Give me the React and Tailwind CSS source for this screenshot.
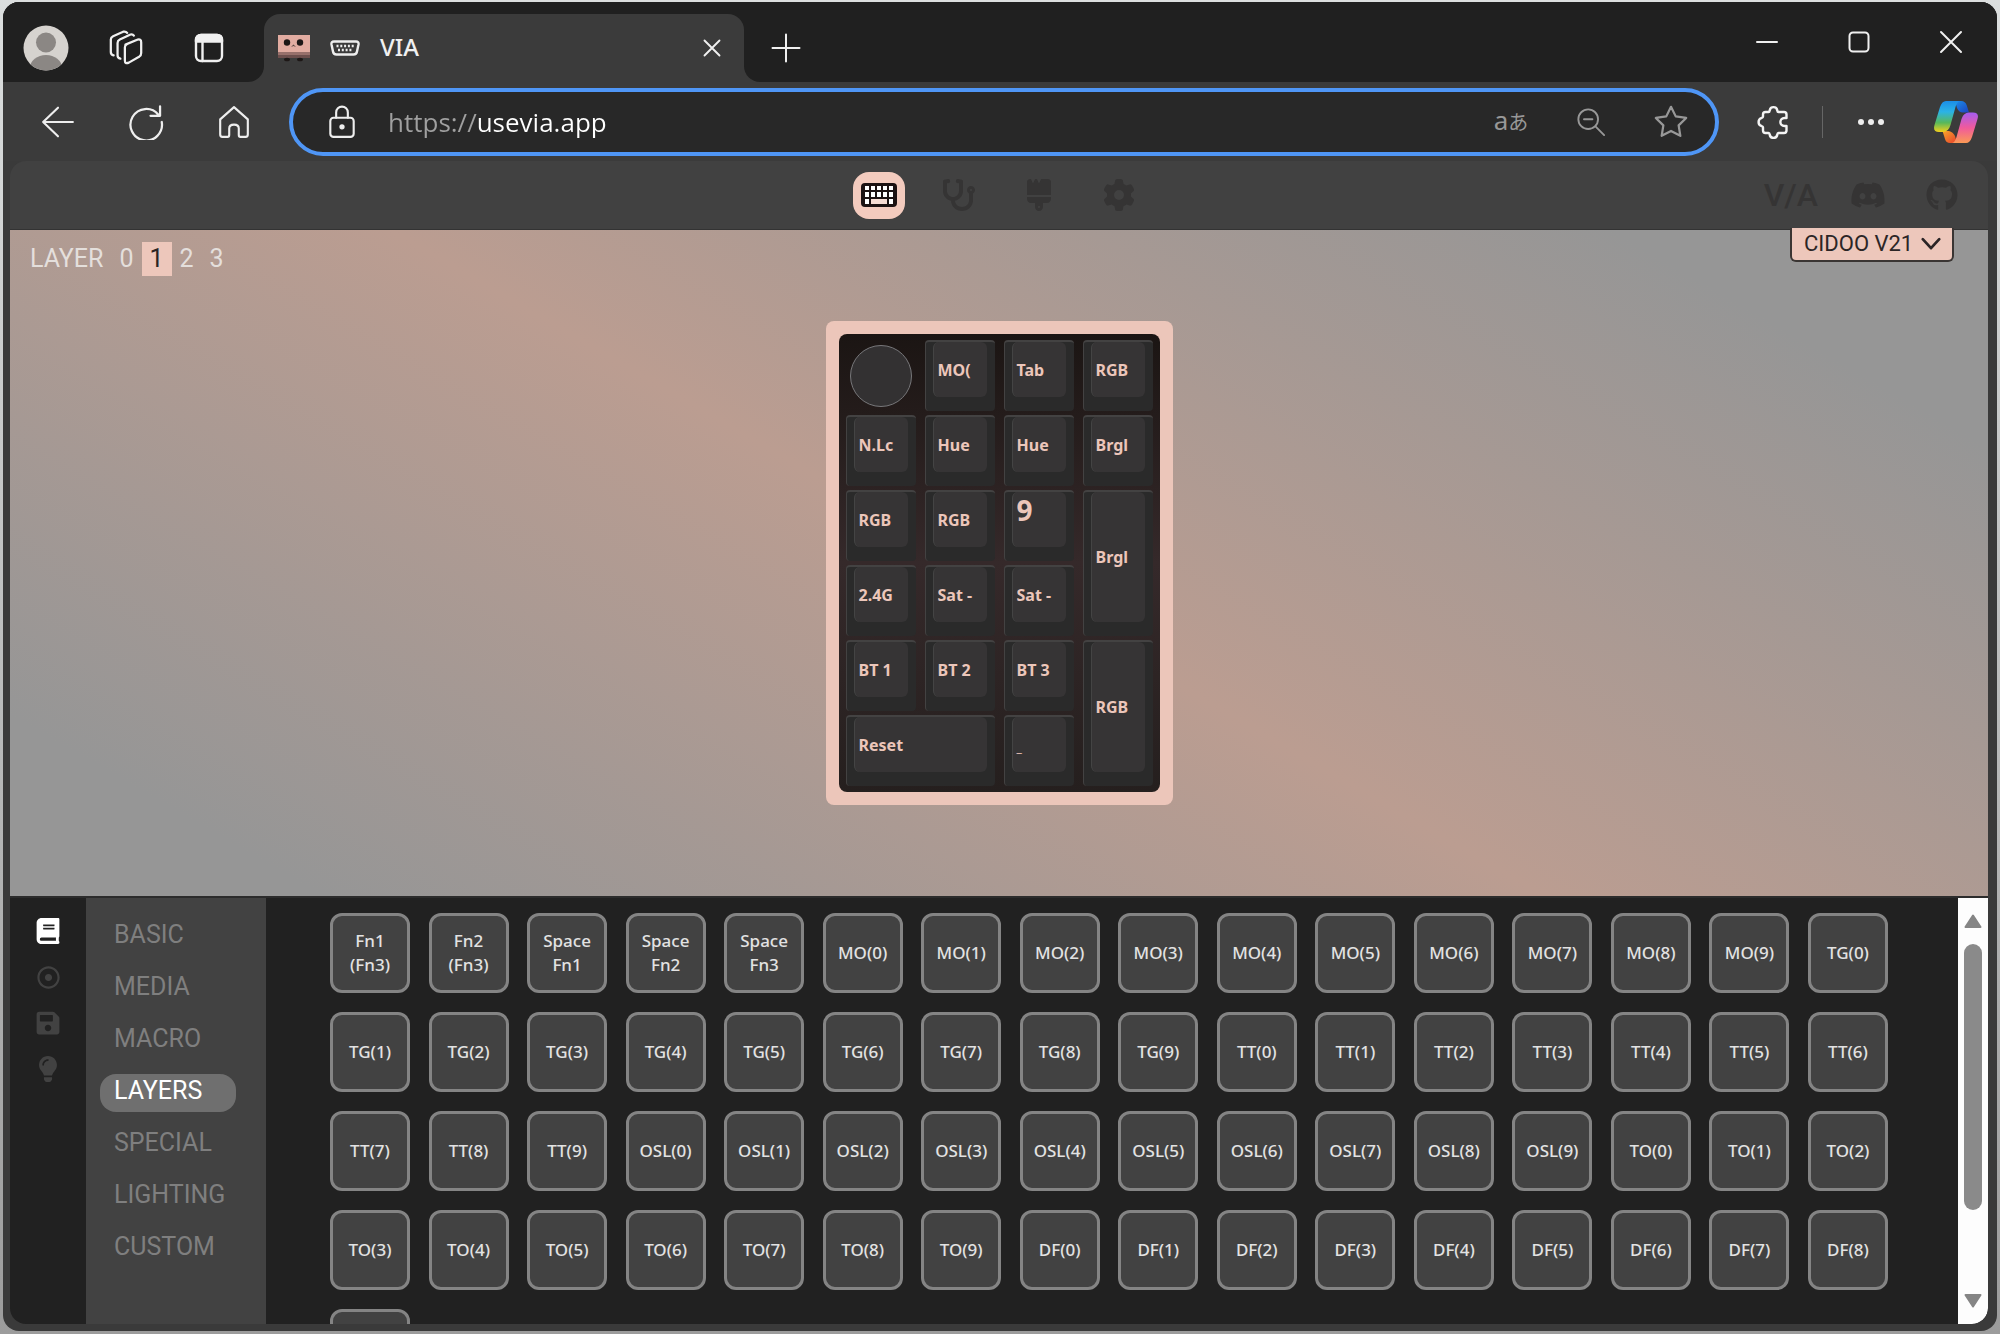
import React from "react";
import {
  FaBook,
  FaDiscord,
  FaGithub,
  FaLightbulb,
  FaRegDotCircle,
  FaSave,
  FaStethoscope,
} from "react-icons/fa";
import { FaBrush, FaGear } from "react-icons/fa6";

const range = (name, from, to) =>
  Array.from({ length: to - from + 1 }, (_, i) => `${name}(${from + i})`);

const keycodes = [
  "Fn1 (Fn3)",
  "Fn2 (Fn3)",
  "Space Fn1",
  "Space Fn2",
  "Space Fn3",
  ...range("MO", 0, 9),
  ...range("TG", 0, 9),
  ...range("TT", 0, 9),
  ...range("OSL", 0, 9),
  ...range("TO", 0, 9),
  ...range("DF", 0, 8),
];

const categories = ["BASIC", "MEDIA", "MACRO", "LAYERS", "SPECIAL", "LIGHTING", "CUSTOM"];

const board = [
  { label: "MO(" },
  { label: "Tab" },
  { label: "RGB" },
  { label: "N.Lc" },
  { label: "Hue" },
  { label: "Hue" },
  { label: "Brgl" },
  { label: "RGB" },
  { label: "RGB" },
  { label: "9", kind: "digit" },
  { label: "Brgl", span: "row-span-2" },
  { label: "2.4G" },
  { label: "Sat -" },
  { label: "Sat -" },
  { label: "BT 1" },
  { label: "BT 2" },
  { label: "BT 3" },
  { label: "RGB", span: "row-span-2" },
  { label: "Reset", span: "col-span-2" },
  { label: "_", kind: "mark" },
];

const labelStyles = {
  digit: "items-start text-[28px] leading-9",
  mark: "items-end pb-4 text-xs leading-4 font-normal",
  text: "items-center text-base",
};

function Line({ size = 32, width = 2, children, ...rest }) {
  return (
    <svg
      width={size}
      height={size}
      viewBox="0 0 32 32"
      fill="none"
      stroke="currentColor"
      strokeWidth={width}
      strokeLinecap="round"
      strokeLinejoin="round"
      aria-hidden="true"
      {...rest}
    >
      {children}
    </svg>
  );
}

function Avatar() {
  return (
    <svg width="46" height="46" viewBox="0 0 46 46" aria-hidden="true">
      <defs>
        <clipPath id="avatar-clip">
          <circle cx="23" cy="23" r="22.5" />
        </clipPath>
      </defs>
      <circle cx="23" cy="23" r="22.5" fill="#d6d3cf" />
      <g clipPath="url(#avatar-clip)" fill="#8b8784">
        <circle cx="23" cy="17.5" r="10" />
        <ellipse cx="23" cy="43" rx="16" ry="13" />
      </g>
    </svg>
  );
}

function Workspaces() {
  return (
    <Line size={36} width={2}>
      <path d="M15.5 13 26.5 8.5Q29.5 8 29.5 11V20.500Q29.500 22.500 28 23.500L18.500 29Q15 30.500 15 27V15.500Q15 13.500 16.500 12.800Z" />
      <path d="M11 25.500Q8.500 25 8.500 22.500V11.500Q8.500 9.500 10.500 8.500L20 4Q22 3.500 23 5" />
      <path d="M5 22.500Q2.500 22 2.500 19.500V8.500Q2.500 6.500 4.500 5.500L13.500 1.500Q16 1 17 2.500" />
    </Line>
  );
}

function TabActions() {
  return (
    <Line size={32} width={2.4}>
      <rect x="3" y="3" width="26" height="26" rx="5" />
      <path d="M3 9.500V8q0-5 5-5h16q5 0 5 5v1.500z" fill="currentColor" />
      <path d="M9.500 10v19" />
    </Line>
  );
}

function Favicon() {
  return (
    <svg width="32" height="27" viewBox="0 0 32 27" aria-hidden="true">
      <rect width="32" height="17" fill="#e2aca1" />
      <rect y="17" width="32" height="3" fill="#98706b" />
      <rect y="20" width="32" height="3" fill="#6d4f4d" />
      <g fill="#1d1716">
        <circle cx="9" cy="7.500" r="3.200" />
        <circle cx="22" cy="7.500" r="3.200" />
        <path d="M13 12l2.500-2.500L18 12l-2.500-1z" opacity=".7" />
        <ellipse cx="9" cy="24.500" rx="3" ry="1.800" />
        <ellipse cx="22" cy="24.500" rx="3" ry="1.800" />
      </g>
    </svg>
  );
}

function SerialPort() {
  return (
    <svg width="30" height="16" viewBox="0 0 30 16" fill="none" aria-hidden="true">
      <path d="M4 1.500h22q3 0 2.500 3l-1.500 7q-.5 3-3.500 3h-17q-3 0-3.500-3l-1.500-7q-.5-3 2.500-3z" stroke="#eee" strokeWidth="2.400" />
      <path d="M6.500 6h18M8 10h15" stroke="#eee" strokeWidth="2.600" strokeDasharray="2 1.800" />
    </svg>
  );
}

function Extensions() {
  return (
    <svg width="32" height="34" viewBox="0 0 32 34" fill="none" stroke="currentColor" strokeWidth="2.400" strokeLinejoin="round" aria-hidden="true">
      <path d="M8.500 7H11.500Q12.500 7 12.700 5.500C13.300 1 19.700 1 20.300 5.500Q20.500 7 21.500 7H27Q29.500 7 29.500 9.500V13H27.500C22 13 22 21 27.500 21H29.500V25.500Q29.500 28 27 28H21.500Q20.500 28 20.300 29.500C19.700 34 13.300 34 12.700 29.500Q12.500 28 11.500 28H8.500Q6 28 6 25.500V22.500Q6 21.500 4.800 21.200C.5 20 .5 14 4.800 12.800Q6 12.500 6 11.500V9.500Q6 7 8.500 7Z" />
    </svg>
  );
}

function KeyboardIcon() {
  const columns = [4, 10, 16, 22, 28];
  return (
    <svg width="36" height="26" viewBox="0 0 36 26" aria-hidden="true">
      <rect x="0" y="1" width="36" height="24" rx="4" fill="#1c1212" />
      <g fill="#fff">
        {columns.map((x) => (
          <rect key={`a${x}`} x={x} y="4" width="4" height="4" />
        ))}
        {columns.map((x) => (
          <rect key={`b${x}`} x={x} y="10" width="4" height="5" />
        ))}
        <rect x="4" y="17" width="4" height="5" />
        <rect x="10" y="17" width="16" height="5" fill="#f6dcd3" />
        <rect x="28" y="17" width="4" height="5" />
      </g>
    </svg>
  );
}

function Copilot() {
  return (
    <svg width="46" height="44" viewBox="0 0 46 44" aria-hidden="true">
      <defs>
        <linearGradient id="cp-left" x1="0" y1="0" x2="0" y2="1">
          <stop offset="0" stopColor="#1b8de8" />
          <stop offset=".35" stopColor="#2bb3e6" />
          <stop offset=".7" stopColor="#58b85a" />
          <stop offset="1" stopColor="#f2cf1d" />
        </linearGradient>
        <linearGradient id="cp-right" x1="0" y1="0" x2="0" y2="1">
          <stop offset="0" stopColor="#a45cf0" />
          <stop offset=".5" stopColor="#f05a9c" />
          <stop offset="1" stopColor="#fb9a55" />
        </linearGradient>
        <linearGradient id="cp-top" x1="0" y1="0" x2="1" y2="1">
          <stop offset="0" stopColor="#1b8de8" />
          <stop offset="1" stopColor="#1c43c0" />
        </linearGradient>
        <linearGradient id="cp-bottom" x1="0" y1="0" x2="1" y2="1">
          <stop offset="0" stopColor="#f6a62b" />
          <stop offset="1" stopColor="#e8402c" />
        </linearGradient>
      </defs>
      <path d="M22 1H28Q32.500 1 33.800 5.500L36 12.500H30Q26 12.500 24 8Z" fill="url(#cp-top)" />
      <path d="M24 43H17Q13 43 12 39L9.500 31H16Q20 32 22 36Z" fill="url(#cp-bottom)" />
      <path d="M13 1H27Q24 1.500 22.500 7L17.500 25Q15.500 32 10 32H6Q-.500 32 1.500 25L7 7Q9 1 13 1Z" fill="url(#cp-left)" />
      <path d="M33 43H19Q22 42.500 23.500 37L28.500 19Q30.500 12.500 36 12.500H40Q46.500 12.500 44.500 19L39 37Q37 43 33 43Z" fill="url(#cp-right)" />
    </svg>
  );
}

function IconButton({ label, className = "", children }) {
  return (
    <button type="button" aria-label={label} className={`flex shrink-0 items-center justify-center ${className}`}>
      {children}
    </button>
  );
}

function TitleBar() {
  return (
    <div className="flex h-20 shrink-0 bg-[#3b3b3b] text-[#f0f0f0]">
      <div className="flex w-[261px] shrink-0 items-center rounded-br-2xl bg-[#202020] pt-3 pl-5">
        <IconButton label="Profile" className="w-[46px]"><Avatar /></IconButton>
        <IconButton label="Workspaces" className="ml-4 w-[82px]"><Workspaces /></IconButton>
        <IconButton label="Tab actions" className="w-[84px]"><TabActions /></IconButton>
      </div>
      <div className="flex w-[480px] bg-linear-to-b from-[#202020] from-50% to-[#3b3b3b] to-50% pt-3">
        <div className="flex flex-1 items-center rounded-t-2xl bg-[#3b3b3b] pr-4 pl-[14px]">
          <Favicon />
          <span className="ml-5"><SerialPort /></span>
          <span className="ml-5 flex-1 pb-[2px] text-2xl font-medium">VIA</span>
          <IconButton label="Close tab" className="w-8">
            <Line size={30}><path d="M8 8l16 16M24 8L8 24" /></Line>
          </IconButton>
        </div>
      </div>
      <div className="flex flex-1 items-center justify-between rounded-bl-2xl bg-[#202020]">
        <IconButton label="New tab" className="mt-3 w-[84px]">
          <Line size={32}><path d="M16 2.500v27M2.500 16h27" /></Line>
        </IconButton>
        <div className="flex">
          <IconButton label="Minimize" className="w-[92px]">
            <Line size={32}><path d="M6 16h20" /></Line>
          </IconButton>
          <IconButton label="Maximize" className="w-[92px]">
            <Line size={32}><rect x="6.500" y="6.500" width="19" height="19" rx="3.500" /></Line>
          </IconButton>
          <IconButton label="Close" className="w-[92px]">
            <Line size={32}><path d="M6 6l20 20M26 6L6 26" /></Line>
          </IconButton>
        </div>
      </div>
    </div>
  );
}

function Toolbar() {
  return (
    <div className="flex h-[79px] shrink-0 items-center bg-[#3b3b3b] pl-[11px] text-[#eee]">
      <IconButton label="Back" className="w-[88px]">
        <Line size={34}><path d="M30 16H2M16 2.500L2 16l14 13.500" /></Line>
      </IconButton>
      <IconButton label="Refresh" className="w-[88px]">
        <Line size={36}><path d="M27 9.500A14 14 0 1 0 30 16M28.500 2v8.500H20" /></Line>
      </IconButton>
      <IconButton label="Home" className="w-[88px]">
        <Line size={34}><path d="M3 13.500 16 2l13 11.500V27.500Q29 30 27 30H22Q20.500 30 20.500 28V22Q20.500 18.500 16 18.500T11.500 22V28Q11.500 30 10 30H5Q3 30 3 27.500Z" /></Line>
      </IconButton>
      <div className="ml-[11px] flex h-[68px] flex-1 items-center rounded-full border-4 border-[#4f96f6] bg-[#282828] pr-1 pl-8 text-[#989898]">
        <Line size={34} className="text-[#eee]">
          <rect x="5" y="12" width="22" height="18" rx="3" />
          <path d="M10.500 12V7a5.500 5.500 0 0 1 11 0v5" />
          <circle cx="16" cy="20.500" r="1.500" fill="currentColor" />
        </Line>
        <input
          aria-label="Address"
          defaultValue="https://usevia.app"
          className="ml-[29px] min-w-0 flex-1 bg-[linear-gradient(90deg,#a0a0a0_90px,#ffffff_90px)] bg-clip-text font-['Open_Sans',sans-serif] text-[26px] leading-10 text-transparent outline-none"
        />
        <button type="button" aria-label="Translate" className="w-20 pb-1 text-[26px] leading-8">
          a<span className="font-['Noto_Sans_CJK_JP',sans-serif] text-xl">あ</span>
        </button>
        <IconButton label="Zoom out" className="w-20">
          <Line size={30}><circle cx="13" cy="13" r="10.500" /><path d="M21 21l9 9M8.500 13h9" /></Line>
        </IconButton>
        <IconButton label="Favorite" className="w-20">
          <Line size={36}><path d="M16 2.500l4.200 8.500 9.300 1.400-6.700 6.600 1.500 9.300-8.300-4.400-8.300 4.400 1.500-9.300L2.500 12.400l9.300-1.400z" /></Line>
        </IconButton>
      </div>
      <IconButton label="Extensions" className="ml-3 w-[84px] text-[#f4f4f4]"><Extensions /></IconButton>
      <div className="ml-[7px] h-8 w-px bg-[#666]" />
      <IconButton label="More" className="ml-1 w-[88px]">
        <svg width="28" height="8" viewBox="0 0 28 8" fill="currentColor" aria-hidden="true">
          <circle cx="4" cy="4" r="3" /><circle cx="14" cy="4" r="3" /><circle cx="24" cy="4" r="3" />
        </svg>
      </IconButton>
      <IconButton label="Copilot" className="w-[82px]"><Copilot /></IconButton>
    </div>
  );
}

function AppHeader() {
  return (
    <header className="grid h-[69px] shrink-0 grid-cols-[1fr_auto_1fr] items-center rounded-t-2xl border-b border-[#333] bg-[#414141] text-[#353434]">
      <div />
      <nav className="flex gap-7">
        <IconButton label="Configure" className="h-[47px] w-[52px] rounded-2xl bg-[#f3cbbe]"><KeyboardIcon /></IconButton>
        <IconButton label="Key tester" className="w-[52px]"><FaStethoscope className="size-8" /></IconButton>
        <IconButton label="Design" className="w-[52px]"><FaBrush className="size-8" /></IconButton>
        <IconButton label="Settings" className="w-[52px]"><FaGear className="size-8" /></IconButton>
      </nav>
      <div className="flex items-center justify-end pr-[30px]">
        <a href="#via" className="font-['Roboto',sans-serif] text-[32px] leading-10 font-medium">V/A</a>
        <a href="#discord" aria-label="Discord" className="ml-8"><FaDiscord className="size-9" /></a>
        <a href="#github" aria-label="GitHub" className="ml-10"><FaGithub className="size-8" /></a>
      </div>
    </header>
  );
}

function BoardKey({ label, kind = "text", span = "" }) {
  return (
    <button
      type="button"
      className={`flex rounded-sm border-t-2 border-l border-[#434242] bg-[#2a2a2a] pr-2 pb-[14px] pl-[7px] ${span}`}
    >
      <span className={`flex flex-1 self-stretch rounded-md border-l border-[#444] bg-[#363435] pl-1 font-bold whitespace-nowrap text-[#ecc6ba] ${labelStyles[kind]}`}>
        {label}
      </span>
    </button>
  );
}

function Board() {
  return (
    <div className="place-self-center rounded-lg bg-[#ecc6ba] p-[13px] [grid-area:1/1]">
      <div className="grid auto-rows-[71px] grid-cols-[repeat(4,70px)] gap-x-[9px] gap-y-1 rounded-lg bg-linear-to-b from-[#1b1513] via-[#35292a] to-[#251f1e] px-[7px] py-[6px] font-['Noto_Sans',sans-serif]">
        <button type="button" aria-label="Encoder" className="m-auto size-[62px] rounded-full border border-[#77777a] bg-[#333132]" />
        {board.map((key, i) => (
          <BoardKey key={i} {...key} />
        ))}
      </div>
    </div>
  );
}

function Stage() {
  return (
    <section className="grid min-h-0 flex-1 bg-[linear-gradient(30deg,#969696_10%,#bb9d91_49%,#969696_88%)] font-['Roboto',sans-serif]">
      <div className="flex items-start justify-between self-start pr-[34px] pl-5 [grid-area:1/1]">
        <div className="mt-3 flex items-center text-[25px] leading-[34px] text-[#e4dfdc]">
          <span className="mr-2">LAYER</span>
          {[0, 1, 2, 3].map((n) => (
            <button key={n} type="button" className={n === 1 ? "w-[30px] bg-[#edc7bb] text-[#2a2424]" : "w-[30px]"}>
              {n}
            </button>
          ))}
        </div>
        <label className="relative -mt-[2px] flex w-[164px] items-center rounded-b-md border-x-2 border-b-2 border-[#3a3533] bg-[#edc7bb] text-[#2b2526]">
          <select aria-label="Keyboard" className="w-full appearance-none bg-transparent pl-3 text-[22px] leading-8 outline-none">
            <option>CIDOO V21</option>
          </select>
          <Line size={22} width={4} className="pointer-events-none absolute right-[10px]">
            <path d="M4 9l12 13L28 9" />
          </Line>
        </label>
      </div>
      <Board />
    </section>
  );
}

function Scrollbar() {
  return (
    <div className="flex w-[30px] shrink-0 flex-col items-center rounded-br-2xl bg-[#fdfdfd] py-4 text-[#858585]">
      <svg width="18" height="14" viewBox="0 0 18 14" fill="currentColor" stroke="currentColor" strokeWidth="2" strokeLinejoin="round" aria-hidden="true">
        <path d="M9 1.500L16.500 13h-15z" />
      </svg>
      <div className="mt-4 h-[266px] w-[18px] rounded-full bg-[#8a8a8a]" />
      <svg className="mt-auto" width="18" height="14" viewBox="0 0 18 14" fill="currentColor" stroke="currentColor" strokeWidth="2" strokeLinejoin="round" aria-hidden="true">
        <path d="M9 12.500L1.500 1h15z" />
      </svg>
    </div>
  );
}

function Panel() {
  return (
    <section className="flex h-[428px] shrink-0 overflow-hidden rounded-b-2xl border-t-2 border-[#2c2c2c] bg-[#212121]">
      <nav className="flex w-[76px] shrink-0 flex-col items-center gap-5 pt-5 text-[#424242]">
        <IconButton label="Keymap" className="h-[26px] text-white"><FaBook className="size-[26px]" /></IconButton>
        <IconButton label="Macros" className="h-[26px]"><FaRegDotCircle className="size-[23px]" /></IconButton>
        <IconButton label="Save and load" className="h-[26px]"><FaSave className="size-[26px]" /></IconButton>
        <IconButton label="Lighting" className="h-[26px]"><FaLightbulb className="size-[26px]" /></IconButton>
      </nav>
      <nav className="flex w-[180px] shrink-0 flex-col items-start gap-[14px] bg-[#424242] pt-5 pl-[14px] font-['Roboto',sans-serif] text-[25px] leading-[33px]">
        {categories.map((name) => (
          <button
            key={name}
            type="button"
            className={
              name === "LAYERS"
                ? "w-[136px] rounded-2xl bg-[#6f6f6f] pb-[5px] pl-[14px] text-left text-white"
                : "w-[136px] pb-[5px] pl-[14px] text-left text-[#7f7f7f]"
            }
          >
            {name}
          </button>
        ))}
      </nav>
      <div className="grid flex-1 grid-cols-[repeat(auto-fill,80px)] content-start justify-between gap-x-4 gap-y-[19px] overflow-hidden pt-[15px] pr-[70px] pl-16">
        {keycodes.map((code) => (
          <button
            key={code}
            type="button"
            className="size-20 rounded-xl border-[3px] border-[#848484] bg-[#424242] px-2 text-[17px] leading-6 font-medium text-[#e2e2e2]"
          >
            {code}
          </button>
        ))}
        <button type="button" aria-label="DF(9)" className="size-20 rounded-xl border-[3px] border-[#848484] bg-[#424242]" />
      </div>
      <Scrollbar />
    </section>
  );
}

export default function App() {
  return (
    <div className="flex h-screen flex-col bg-linear-to-b from-[#dcdfdf] to-[#9c9c9c] px-[3px] pt-[2px] pb-[3px] font-['Noto_Sans',sans-serif]">
      <div className="flex min-h-0 flex-1 flex-col overflow-hidden rounded-2xl bg-[#3a3a3a]">
        <TitleBar />
        <Toolbar />
        <main className="mr-[9px] mb-[7px] ml-[7px] flex min-h-0 flex-1 flex-col">
          <AppHeader />
          <Stage />
          <Panel />
        </main>
      </div>
    </div>
  );
}
